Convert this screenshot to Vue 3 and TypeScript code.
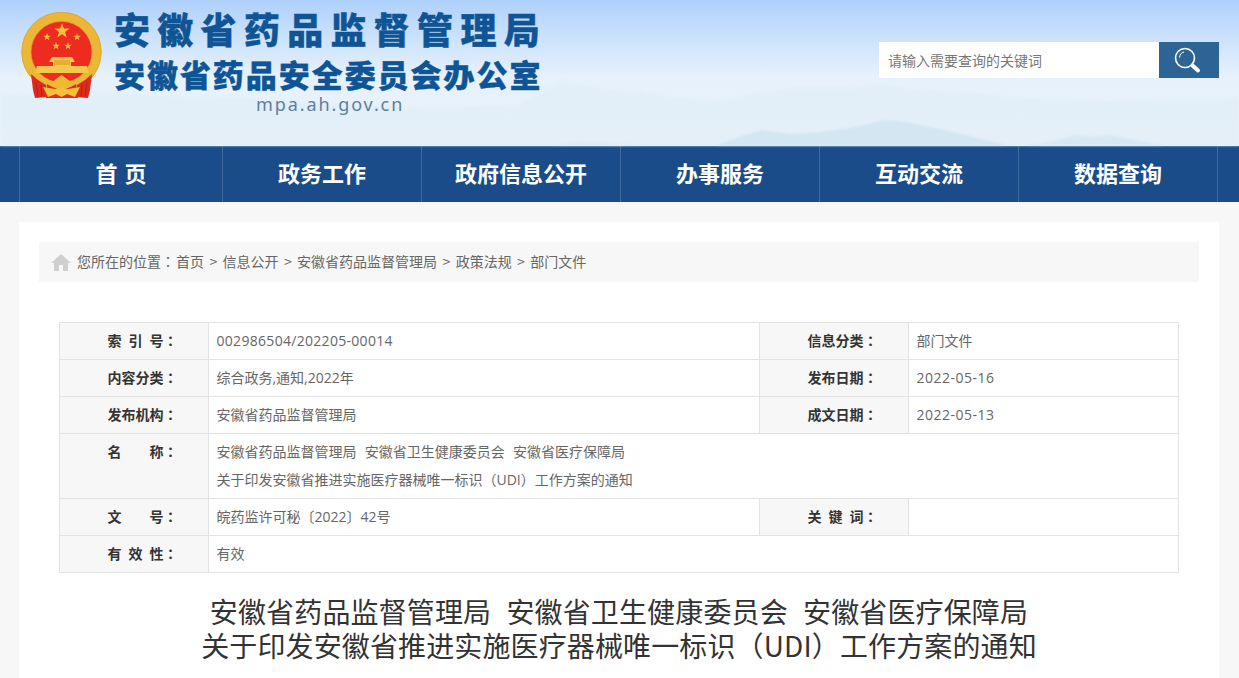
<template>
  <div class="page">
    <header class="site-header">
      <svg class="mountains" viewBox="0 0 1239 146" preserveAspectRatio="none" aria-hidden="true">
        <!-- far range -->
        <path d="M0 96 L50 93 L110 92 L170 96 L240 97 L300 102 L420 108 L520 104 L560 81 L600 88 L640 92 L665 96 L720 101 L750 94 L790 88 L850 88 L885 85 L905 88 L950 91 L1010 97 L1100 101 L1239 98 L1239 146 L0 146 Z" fill="#e1edf7" opacity="0.75" />
        <!-- near peaks -->
        <path d="M715 146 L745 135 L762 130 L790 134 L812 133 L850 128 L885 120 L905 122 L930 127 L965 135 L985 140 L1010 146 Z" fill="#d2e4f1" opacity="0.9" />
        <path d="M1025 146 L1050 142 L1075 135 L1090 137 L1110 135 L1140 141 L1165 146 Z" fill="#d6e6f2" opacity="0.85" />
        <path d="M550 146 L575 141 L600 142 L650 146 Z" fill="#dde9f4" opacity="0.8" />
      </svg>

      <div class="brand">
        <svg class="emblem" viewBox="0 0 84 88" aria-hidden="true">
          <circle cx="41.5" cy="40" r="35.2" fill="#ee2b20" stroke="#ecb737" stroke-width="9.6" />
          <circle cx="41.5" cy="40" r="39.7" fill="none" stroke="#d89f2c" stroke-width="0.7" />
          <circle cx="41.5" cy="40" r="30.6" fill="none" stroke="#d89f2c" stroke-width="0.7" />
          <path :d="star(42, 19, 8)" fill="#f3c13a" />
          <path :d="star(27, 25, 4)" fill="#f3c13a" />
          <path :d="star(57, 25, 4)" fill="#f3c13a" />
          <path :d="star(36, 34, 4)" fill="#f3c13a" />
          <path :d="star(48, 34, 4)" fill="#f3c13a" />
          <!-- tiananmen -->
          <path d="M32 45 L52 45 L55 50 L51 50 L51 54 L67 54 L69 61 L15 61 L17 54 L33 54 L33 50 L29 50 Z" fill="#f4c84a" />
          <path d="M34 48 L50 48 L50 53 L34 53 Z" fill="#e8ab34" />
          <!-- drapes and knot -->
          <path d="M11 62 L18 68 L26 73 L27 85 L15 86 L13 78 Z" fill="#de2a1c" />
          <path d="M72 62 L65 68 L57 73 L56 85 L68 86 L70 78 Z" fill="#de2a1c" />
          <path d="M16 70 L18 85 M21 73 L22 85 M67 70 L65 85 M62 73 L61 85" stroke="#a81c14" stroke-width="0.7" fill="none" />
          <path d="M27 72 Q41.5 82 56 72 L58 86 L26 86 Z" fill="#e8291f" />
          <path d="M31 71 L36 67 L41.5 63 L47 67 L53 71 L49 74 L34 74 Z" fill="#eeb934" />
          <path d="M23 75 L35 77 L41.5 75 L48 77 L60 75 L55 85 L47 82 L41.5 85 L36 82 L28 85 Z" fill="#f3c13a" />
        </svg>
        <div class="brand-text">
          <div class="brand-main">安徽省药品监督管理局</div>
          <div class="brand-sub">安徽省药品安全委员会办公室</div>
          <div class="brand-url">mpa.ah.gov.cn</div>
        </div>
      </div>

      <form class="search" @submit.prevent>
        <input class="search-input" type="text" placeholder="请输入需要查询的关键词" />
        <button class="search-btn" type="submit" aria-label="搜索">
          <svg width="28" height="28" viewBox="0 0 28 28" fill="none">
            <circle cx="12" cy="12" r="9.5" stroke="#fff" stroke-width="1.6" />
            <path d="M6.5 11.5 A6 6 0 0 1 11 6" stroke="#fff" stroke-width="1" />
            <path d="M19.5 19.5 L25 24.5" stroke="#fff" stroke-width="4" stroke-linecap="round" />
          </svg>
        </button>
      </form>
    </header>

    <nav class="main-nav">
      <a v-for="item in navItems" :key="item" class="nav-item" href="#">{{ item }}</a>
    </nav>

    <main class="card">
      <div class="crumbs">
        <svg class="home-icon" viewBox="0 0 20 17" aria-hidden="true">
          <path d="M10 0 L20 9 L17 9 L17 17 L12 17 L12 11 L8 11 L8 17 L3 17 L3 9 L0 9 Z" fill="#cfcfcf" />
        </svg>
        <span class="crumb-lead">您所在的位置<span class="colon">：</span></span>
        <template v-for="(c, i) in crumbs" :key="c">
          <span v-if="i > 0" class="crumb-sep">&gt;</span>
          <a class="crumb-link" href="#">{{ c }}</a>
        </template>
      </div>

      <table class="info-table">
        <colgroup>
          <col class="col-label" />
          <col class="col-value" />
          <col class="col-label" />
          <col class="col-value2" />
        </colgroup>
        <tbody>
          <tr>
            <th><span class="lbl">索引号</span><span class="colon">：</span></th>
            <td class="num">002986504/202205-00014</td>
            <th><span class="lbl">信息分类</span><span class="colon">：</span></th>
            <td>部门文件</td>
          </tr>
          <tr>
            <th><span class="lbl">内容分类</span><span class="colon">：</span></th>
            <td>综合政务,通知,2022年</td>
            <th><span class="lbl">发布日期</span><span class="colon">：</span></th>
            <td class="num date">2022-05-16</td>
          </tr>
          <tr>
            <th><span class="lbl">发布机构</span><span class="colon">：</span></th>
            <td>安徽省药品监督管理局</td>
            <th><span class="lbl">成文日期</span><span class="colon">：</span></th>
            <td class="num date">2022-05-13</td>
          </tr>
          <tr class="name-row">
            <th><span class="lbl">名称</span><span class="colon">：</span></th>
            <td colspan="3">
              <div>{{ orgLine }}</div>
              <div>{{ subjectLine }}</div>
            </td>
          </tr>
          <tr>
            <th><span class="lbl">文号</span><span class="colon">：</span></th>
            <td>皖药监许可秘〔2022〕42号</td>
            <th><span class="lbl">关键词</span><span class="colon">：</span></th>
            <td></td>
          </tr>
          <tr>
            <th><span class="lbl">有效性</span><span class="colon">：</span></th>
            <td colspan="3">有效</td>
          </tr>
        </tbody>
      </table>

      <h1 class="doc-title">
        <div>{{ orgLine }}</div>
        <div>{{ subjectLine }}</div>
      </h1>
    </main>
  </div>
</template>

<script setup lang="ts">
const navItems: string[] = ['首 页', '政务工作', '政府信息公开', '办事服务', '互动交流', '数据查询']
const crumbs: string[] = ['首页', '信息公开', '安徽省药品监督管理局', '政策法规', '部门文件']

const orgLine = '安徽省药品监督管理局\u00a0\u00a0安徽省卫生健康委员会\u00a0\u00a0安徽省医疗保障局'
const subjectLine = '关于印发安徽省推进实施医疗器械唯一标识（UDI）工作方案的通知'

// five pointed star for the emblem
function star(cx: number, cy: number, r: number): string {
  const pts: string[] = []
  for (let i = 0; i < 10; i++) {
    const rad = i % 2 === 0 ? r : r * 0.4
    const a = (Math.PI / 5) * i - Math.PI / 2
    pts.push(`${(cx + rad * Math.cos(a)).toFixed(2)} ${(cy + rad * Math.sin(a)).toFixed(2)}`)
  }
  return 'M' + pts.join(' L') + ' Z'
}
</script>

<style>
html,
body {
  height: 100%;
  overflow: hidden;
}
</style>

<style scoped>
.page {
  height: 678px;
  overflow: hidden;
  background: #f7f7f7;
  font-family: "Noto Sans CJK SC", "Liberation Sans", sans-serif;
  font-size: 14px;
  color: #666;
}

.site-header {
  position: relative;
  height: 146px;
  box-sizing: border-box;
  padding: 12px 20px 0 20px;
  display: flex;
  justify-content: space-between;
  background: linear-gradient(180deg, #aed0fc 0%, #cbe1fb 25%, #e6f1fc 52%, #eaf3fb 100%);
}

.mountains {
  position: absolute;
  left: 0;
  top: 0;
  width: 100%;
  height: 100%;
  filter: blur(1.2px);
}

.brand {
  position: relative;
  display: flex;
  gap: 10px;
}

.emblem {
  width: 84px;
  height: 88px;
  flex: none;
}

.brand-text {
  width: 440px;
  margin-top: -3px;
  color: #0f5596;
  font-weight: 900;
  -webkit-text-stroke: 0.4px #0f5596;
}

.brand-main {
  font-size: 36px;
  line-height: 38px;
  letter-spacing: 7.3px;
  white-space: nowrap;
}

.brand-sub {
  margin-top: 9px;
  font-size: 31px;
  line-height: 36px;
  letter-spacing: 1.95px;
  white-space: nowrap;
}

.brand-url {
  margin-top: 0;
  margin-left: 142px;
  font-family: "Noto Sans", sans-serif;
  font-weight: 400;
  font-size: 18px;
  line-height: 24px;
  letter-spacing: 1.9px;
  color: #5c7f9f;
  -webkit-text-stroke: 0;
}

.search {
  position: relative;
  display: flex;
  height: 36px;
  margin-top: 30px;
}

.search-input {
  width: 280px;
  height: 36px;
  box-sizing: border-box;
  padding: 0 9px;
  border: none;
  outline: none;
  background: #fff;
  font-family: inherit;
  font-size: 14px;
}

.search-input::placeholder {
  color: #777;
  opacity: 1;
}

.search-btn {
  width: 60px;
  height: 36px;
  padding: 0 4px 0 0;
  border: none;
  background: #2d6496;
  display: flex;
  align-items: center;
  justify-content: center;
  cursor: pointer;
}

.main-nav {
  height: 56px;
  padding-left: 19px;
  display: flex;
  background: #1a4c8a;
}

.nav-item {
  width: 199px;
  height: 56px;
  box-sizing: border-box;
  border-left: 1px solid #3f6a9e;
  color: #fff;
  font-size: 22px;
  font-weight: 700;
  line-height: 53px;
  word-spacing: 2px;
  text-align: center;
  text-decoration: none;
  white-space: nowrap;
}

.nav-item:first-child {
  width: 203px;
}

.nav-item:last-child {
  width: 200px;
  border-right: 1px solid #3f6a9e;
}

.card {
  width: 1200px;
  height: 456px;
  margin: 20px 0 0 19px;
  box-sizing: border-box;
  padding: 20px;
  background: #fff;
}

.crumbs {
  height: 40px;
  box-sizing: border-box;
  padding: 0 0 2px 12px;
  display: flex;
  align-items: center;
  gap: 5.4px;
  background: #f7f7f7;
  color: #666;
  white-space: nowrap;
}

.home-icon {
  width: 20px;
  height: 17px;
  margin: 2px 0.6px 0 0;
  flex: none;
}

.crumb-lead {
  margin-right: -4.4px;
}

.crumb-link {
  color: #666;
  text-decoration: none;
}

/* TC font keeps the full width colon centred in its box */
.colon {
  font-family: "Noto Sans CJK TC", sans-serif;
}

.info-table {
  width: 1119px;
  margin: 40px 0 0 20px;
  border-collapse: collapse;
  table-layout: fixed;
}

.col-label {
  width: 149px;
}

.col-value {
  width: 551px;
}

.col-value2 {
  width: 270px;
}

.info-table th,
.info-table td {
  height: 37px;
  box-sizing: border-box;
  border: 1px solid #e3e3e3;
  padding: 0 0 0 7.5px;
  text-align: left;
  font-family: "Open Sans", "Noto Sans CJK SC", sans-serif;
  font-size: 14px;
  line-height: 20px;
  word-spacing: 0.5px;
}

.info-table th {
  padding: 0 0 2px 47.5px;
  background: #f7f7f7;
  color: #333;
  font-weight: 700;
  white-space: nowrap;
}

.info-table .num {
  letter-spacing: 0.3px;
}

.info-table .date {
  letter-spacing: 0.5px;
}

.lbl {
  display: inline-block;
  width: 56px;
  text-align-last: justify;
}

.info-table .name-row th {
  height: 65px;
  padding-top: 3px;
  vertical-align: top;
  line-height: 28px;
}

.info-table .name-row td {
  height: 65px;
  padding-top: 4px;
  vertical-align: top;
  line-height: 28px;
}

.doc-title {
  margin: 21px 0 0 0;
  color: #333;
  font-size: 28px;
  font-weight: 400;
  line-height: 34px;
  letter-spacing: 0.13px;
  word-spacing: 1.25px;
  text-align: center;
  white-space: nowrap;
}
</style>
